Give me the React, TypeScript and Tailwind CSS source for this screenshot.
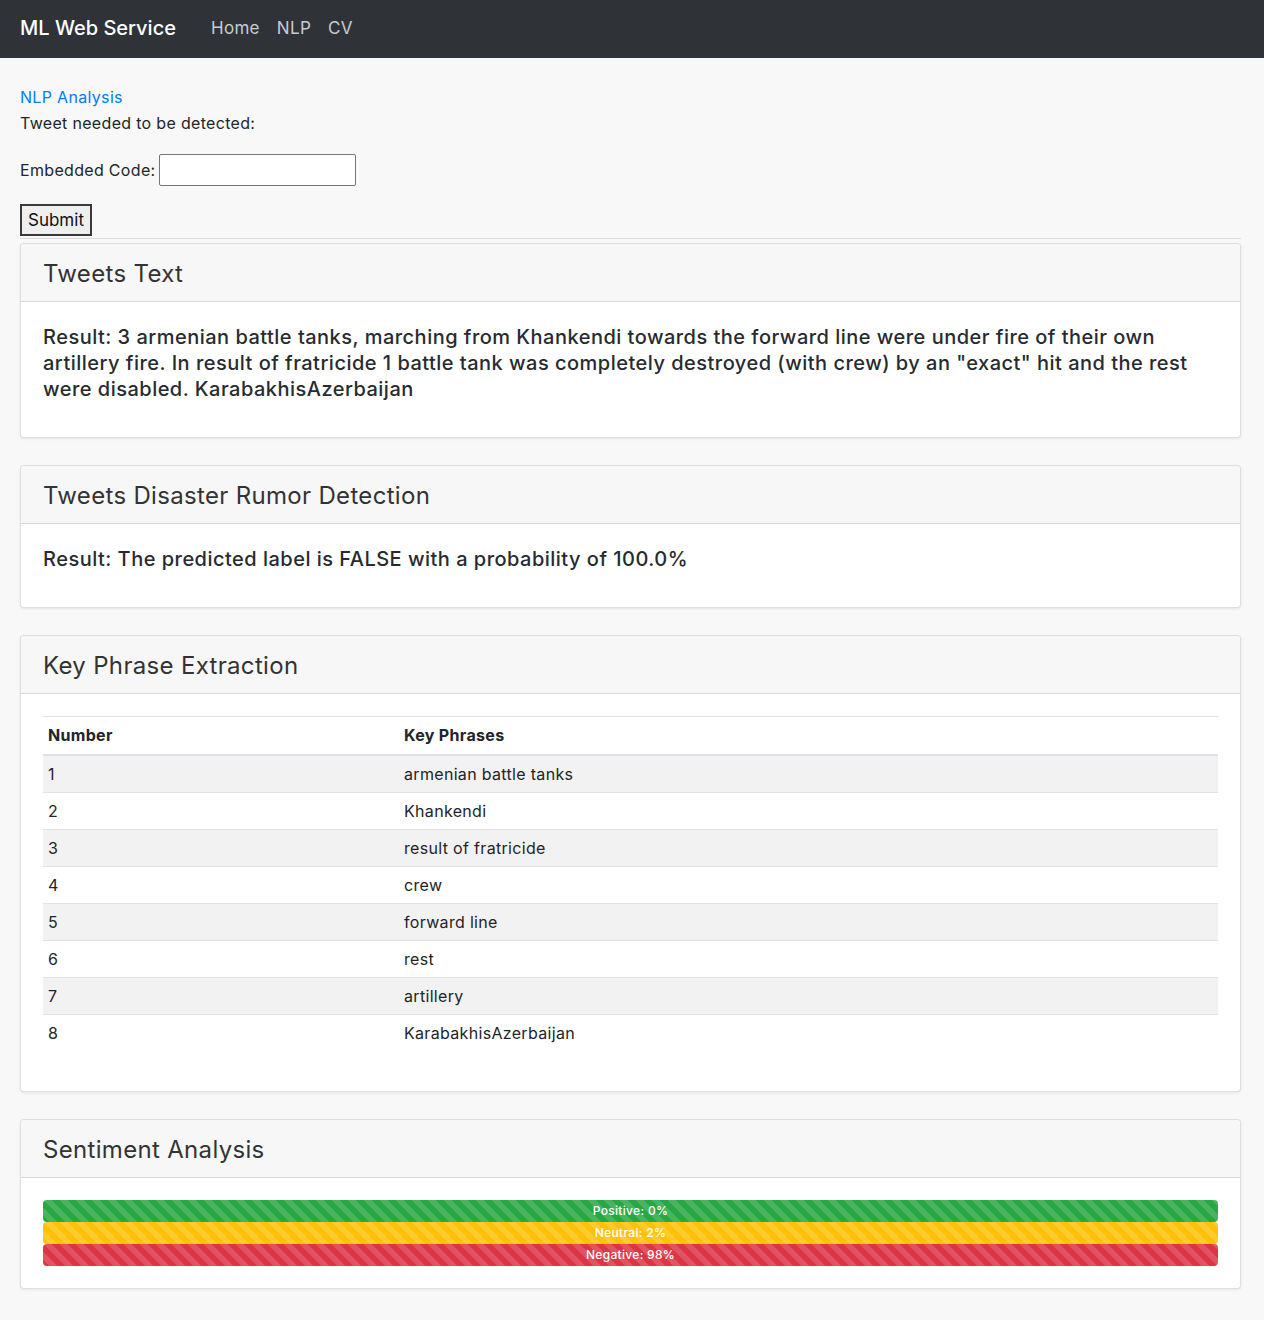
import React from "react";

const phrases = [
  "armenian battle tanks",
  "Khankendi",
  "result of fratricide",
  "crew",
  "forward line",
  "rest",
  "artillery",
  "KarabakhisAzerbaijan",
];

const bars = [
  { label: "Positive: 0%", color: "bg-[#28a745]" },
  { label: "Neutral: 2%", color: "bg-[#ffc107]" },
  { label: "Negative: 98%", color: "bg-[#dc3545]" },
];

const Card = ({ title, children, bodyClass }: { title: string; children: React.ReactNode; bodyClass?: string }) => (
  <div className="rounded-[4px] border border-black/[.125] bg-white shadow-[0_1px_3px_rgba(0,0,0,0.08)]">
    <div className="h-[58px] flex items-center px-[22px] bg-[#f7f7f7] border-b border-black/[.125] rounded-t-[4px]">
      <h3 className="text-[24px] leading-[29px] text-[#333] pt-[1px]">{title}</h3>
    </div>
    <div className={bodyClass ?? "px-[22px] pt-[22px] pb-[35px]"}>{children}</div>
  </div>
);

export default function App() {
  return (
    <div className="min-h-[1320px] bg-[#f8f8f8] text-[#212529] font-['Inter','Noto_Sans',sans-serif] text-[16px] leading-[24px] tracking-[0.02em]">
      {/* navbar */}
      <nav className="h-[58px] bg-[#2f3338] flex items-center px-5 pb-[3px]">
        <a className="text-white text-[20px] font-medium tracking-normal mr-[35px]">ML Web Service</a>
        <div className="flex items-center gap-[17px] text-[#c8ccd1] text-[17px]">
          <a>Home</a>
          <a>NLP</a>
          <a>CV</a>
        </div>
      </nav>

      <main className="pl-5 pr-[23px] pt-[27px] pb-8">
        <a className="block text-[#007bff] h-[26px]">NLP Analysis</a>
        <p className="h-[24px]">Tweet needed to be detected:</p>

        <form className="mt-[19px]">
          <div className="flex items-center gap-[4px]">
            <label>Embedded Code:</label>
            <input
              type="text"
              className="w-[197px] h-[32px] bg-white border border-[#767676] rounded-[2px] px-1 outline-none"
            />
          </div>
          <button
            type="button"
            className="mt-[18px] h-[32px] px-[6px] border-2 border-[#3a3a3a] bg-[#efefef] text-[#111] text-[17px] leading-none tracking-normal"
          >
            Submit
          </button>
        </form>
        <hr className="mt-[2px] border-t border-[#dcdcdc]" />

        <div className="mt-[4px] flex flex-col gap-[27px]">
          <Card title="Tweets Text">
            <h5 className="text-[20px] leading-[26px] font-medium tracking-[0.024em] text-[#272b30]">
              Result: 3 armenian battle tanks, marching from Khankendi towards the forward line were under fire of their own
              artillery fire. In result of fratricide 1 battle tank was completely destroyed (with crew) by an "exact" hit and
              the rest were disabled. KarabakhisAzerbaijan
            </h5>
          </Card>

          <Card title="Tweets Disaster Rumor Detection">
            <h5 className="text-[20px] leading-[26px] font-medium tracking-[0.024em] text-[#272b30]">
              Result: The predicted label is FALSE with a probability of 100.0%
            </h5>
          </Card>

          <Card title="Key Phrase Extraction" bodyClass="px-[22px] pt-[22px] pb-[40px]">
            <table className="w-full border-collapse text-left">
              <thead>
                <tr className="border-t border-[#dee2e6]">
                  <th className="w-[356px] px-[5px] py-[6px] font-bold border-b-2 border-[#dee2e6] h-[38px]">Number</th>
                  <th className="px-[5px] py-[6px] font-bold border-b-2 border-[#dee2e6]">Key Phrases</th>
                </tr>
              </thead>
              <tbody>
                {phrases.map((p, i) => (
                  <tr key={p} className={`border-t border-[#dee2e6] ${i % 2 === 0 ? "bg-[#f2f2f2]" : "bg-white"}`}>
                    <td className="px-[5px] py-[6px] h-[37px]">{i + 1}</td>
                    <td className="px-[5px] py-[6px]">{p}</td>
                  </tr>
                ))}
              </tbody>
            </table>
          </Card>

          <Card title="Sentiment Analysis" bodyClass="p-[22px]">
            <div className="flex flex-col">
              {bars.map((b) => (
                <div
                  key={b.label}
                  className={`h-[22px] rounded-[4px] ${b.color} bg-[linear-gradient(45deg,rgba(255,255,255,.15)_25%,transparent_25%,transparent_50%,rgba(255,255,255,.15)_50%,rgba(255,255,255,.15)_75%,transparent_75%,transparent)] bg-[length:16px_16px] flex items-center justify-center text-white text-[12px] font-medium leading-none`}
                >
                  {b.label}
                </div>
              ))}
            </div>
          </Card>
        </div>
      </main>
    </div>
  );
}
